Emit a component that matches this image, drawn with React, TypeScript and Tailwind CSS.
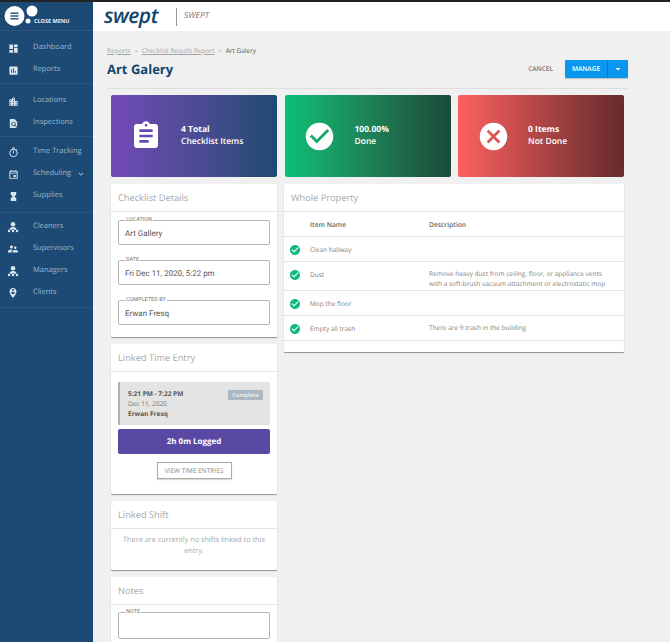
import { ReactNode } from 'react';
import {
  MdDashboard,
  MdAssessment,
  MdLocationCity,
  MdFindInPage,
  MdOutlineTimer,
  MdOutlineEvent,
  MdHourglassFull,
  MdPersonPinCircle,
  MdSupervisorAccount,
  MdExpandMore,
  MdArrowDropDown,
  MdAssignment,
  MdCheckCircle,
  MdCancel,
} from 'react-icons/md';

function OrgIcon() {
  return (
    <svg viewBox="0 0 24 24" className="w-[12px] h-[12px]" fill="currentColor">
      <circle cx="12" cy="6.500" r="4.500" />
      <path d="M5 17c0-3.500 3.500-5 7-5s7 1.500 7 5l-4 1-3-2-3 2z" />
      <circle cx="4" cy="20" r="2.500" />
      <circle cx="12" cy="20" r="2.500" />
      <circle cx="20" cy="20" r="2.500" />
    </svg>
  );
}

const navGroups: { padding: string; items: { label: string; icon: ReactNode; chevron?: boolean }[] }[] = [
  {
    padding: 'pt-[6px] pb-[2px]',
    items: [
      { label: 'Dashboard', icon: <MdDashboard size={11} /> },
      { label: 'Reports', icon: <MdAssessment size={11} /> },
    ],
  },
  {
    padding: 'pt-[6px] pb-[2px]',
    items: [
      { label: 'Locations', icon: <MdLocationCity size={11} /> },
      { label: 'Inspections', icon: <MdFindInPage size={11} /> },
    ],
  },
  {
    padding: 'pt-[4px] pb-[5px]',
    items: [
      { label: 'Time Tracking', icon: <MdOutlineTimer size={11} /> },
      { label: 'Scheduling', icon: <MdOutlineEvent size={11} />, chevron: true },
      { label: 'Supplies', icon: <MdHourglassFull size={11} /> },
    ],
  },
  {
    padding: 'pt-[3px] pb-[3px]',
    items: [
      { label: 'Cleaners', icon: <OrgIcon /> },
      { label: 'Supervisors', icon: <MdSupervisorAccount size={12} /> },
      { label: 'Managers', icon: <OrgIcon /> },
      { label: 'Clients', icon: <MdPersonPinCircle size={12} /> },
    ],
  },
];

function Sidebar() {
  return (
    <aside className="w-[93px] shrink-0 bg-[#1c4a74] text-[#9db8cf]">
      <div className="h-[29px] flex items-start border-b border-[#2a567e]">
        <svg viewBox="0 0 34 29" className="w-[34px] h-[29px] shrink-0 overflow-visible">
          <circle cx="14.500" cy="14" r="10" fill="#fff" />
          <rect x="10.500" y="10.500" width="8" height="1.400" fill="#1c4a74" />
          <rect x="10.500" y="13.300" width="8" height="1.400" fill="#1c4a74" />
          <rect x="10.500" y="16.100" width="8" height="1.400" fill="#1c4a74" />
          <circle cx="32" cy="9" r="5.500" fill="#fff" />
          <circle cx="28" cy="19" r="2.500" fill="#fff" />
        </svg>
        <span className="mt-[15px] text-[5.500px] leading-[8px] font-bold text-[#e8eef4] whitespace-nowrap">CLOSE MENU</span>
      </div>
      {navGroups.map((group, i) => (
        <div key={i} className={`${group.padding} border-b border-[#2a567e]`}>
          {group.items.map((item) => (
            <div key={item.label} className="h-[22px] flex items-center">
              <span className="w-[26px] mr-[7px] flex justify-center text-[#dbe5ee]">{item.icon}</span>
              <span className="text-[7.500px] whitespace-nowrap">{item.label}</span>
              {item.chevron && <MdExpandMore size={10} className="ml-[5px]" />}
            </div>
          ))}
        </div>
      ))}
    </aside>
  );
}

function StatCard({ icon, title, sub, gradient }: { icon: ReactNode; title: string; sub: string; gradient: string }) {
  return (
    <div className={`w-[166px] h-[82px] rounded-[2px] flex items-center text-white ${gradient}`}>
      <div className="w-[70px] flex justify-center">{icon}</div>
      <div className="text-[8.500px] leading-[12.500px]">
        <div className="font-bold">{title}</div>
        <div className="font-semibold">{sub}</div>
      </div>
    </div>
  );
}

function Panel({ title, className, children }: { title: string; className?: string; children: ReactNode }) {
  return (
    <section className={`bg-white rounded-[1px] shadow-[0_1px_1px_rgba(0,0,0,0.4)] ${className ?? ''}`}>
      <h2 className="h-[28px] pl-[7px] pt-[1px] flex items-center text-[9.250px] text-[#a8a8a8] border-b border-[#e3e3e3]">{title}</h2>
      {children}
    </section>
  );
}

function Field({ label, value, height = 'h-[28px]' }: { label: string; value?: string; height?: string }) {
  return (
    <fieldset className={`mx-[7px] border border-[#b5b5b5] rounded-[2px] pl-[6px] font-['Roboto',sans-serif] ${height}`}>
      <legend className="text-[5.500px] leading-[6px] text-[#777] uppercase px-[1px]">{label}</legend>
      {value && <div className="text-[8px] leading-[18px] text-[#555] mt-[2px]">{value}</div>}
    </fieldset>
  );
}

const rows = [
  { name: 'Clean hallway', desc: '', h: 'h-[25px]' },
  {
    name: 'Dust',
    desc: 'Remove heavy dust from ceiling, floor, or appliance vents with a soft-brush vacuum attachment or electrostatic mop',
    h: 'h-[29px]',
  },
  { name: 'Mop the floor', desc: '', h: 'h-[25px]' },
  { name: 'Empty all trash', desc: 'There are 9 trash in the building', h: 'h-[25px]' },
];

export default function App() {
  return (
    <div className="h-[642px] w-[670px] overflow-hidden flex flex-col bg-[#f0f0f0] font-['Open_Sans',sans-serif] [text-rendering:geometricPrecision]">
      <div className="h-[2px] bg-[#222] shrink-0" />
      <div className="flex flex-1 min-h-0">
        <Sidebar />
        <main className="flex-1 min-w-0">
          <header className="h-[29px] bg-white flex items-center">
            <span className="ml-[11px] w-[72px] text-[21px] leading-[26px] -mt-[2px] font-semibold italic text-[#12456b] tracking-[-0.5px]">swept</span>
            <span className="h-[18px] w-px bg-[#999]" />
            <span className="ml-[7px] text-[8.500px] italic text-[#777]">SWEPT</span>
          </header>

          <div className="ml-[14px] w-[521px] h-[58px] border-b border-[#dedede]">
            <div className="pt-[15px] flex items-center gap-[4px] text-[6.500px] leading-[9px] text-[#a5a5a5]">
              <span className="underline">Reports</span>
              <span>»</span>
              <span className="underline">Checklist Results Report</span>
              <span>»</span>
              <span className="text-[#555]">Art Galery</span>
            </div>
            <div className="flex items-start justify-between">
              <h1 className="mt-[4px] text-[13px] leading-[20px] font-bold text-[#12456b]">Art Galery</h1>
              <div className="flex items-center mt-[5px]">
                <span className="text-[6.500px] font-semibold text-[#777] mr-[12px]">CANCEL</span>
                <div className="w-[63px] h-[18px] bg-[#0a96ee] rounded-[1px] flex items-center text-white shadow-[0_1px_1px_rgba(0,0,0,0.2)]">
                  <span className="w-[42px] text-center text-[6.500px] font-semibold">MANAGE</span>
                  <span className="flex-1 h-full border-l border-[#0b76bb] flex items-center justify-center">
                    <MdArrowDropDown size={12} />
                  </span>
                </div>
              </div>
            </div>
          </div>

          <div className="ml-[18px] w-[513px] mt-[6px] flex justify-between">
            <StatCard
              icon={<MdAssignment size={32} />}
              title="4 Total"
              sub="Checklist Items"
              gradient="bg-gradient-to-r from-[#7249b8] to-[#1d4a72]"
            />
            <StatCard
              icon={<MdCheckCircle size={33} />}
              title="100.00%"
              sub="Done"
              gradient="bg-gradient-to-r from-[#08c076] to-[#1b4a3a]"
            />
            <StatCard
              icon={<MdCancel size={33} />}
              title="0 Items"
              sub="Not Done"
              gradient="bg-gradient-to-r from-[#ff6060] to-[#652b2d]"
            />
          </div>

          <div className="ml-[18px] mt-[7px] flex items-start gap-[7px]">
            <div className="w-[166px] flex flex-col gap-[7px] shrink-0">
              <Panel title="Checklist Details" className="h-[153px]">
                <div className="pt-[5px] flex flex-col gap-[12px]">
                  <Field label="Location" value="Art Gallery" />
                  <Field label="Date" value="Fri Dec 11, 2020, 5:22 pm" />
                  <Field label="Completed by" value="Erwan Fresq" />
                </div>
              </Panel>

              <Panel title="Linked Time Entry" className="h-[150px]">
                <div className="mx-[7px] mt-[10px] h-[43px] bg-[#e4e4e4] border-l-2 border-[#a9b5be] rounded-[1px] pl-[8px] pt-[7px] relative text-[6.500px] leading-[10px] text-[#555]">
                  <div className="font-bold">5:21 PM - 7:22 PM</div>
                  <div className="text-[#777]">Dec 11, 2020</div>
                  <div className="font-bold">Erwan Fresq</div>
                  <span className="absolute right-[7px] top-[8px] w-[35px] h-[10px] bg-[#a9b8c2] rounded-[1px] text-[5.500px] leading-[10px] text-center font-bold text-[#e8eef0]">Complete</span>
                </div>
                <div className="mx-[7px] mt-[4px] h-[25px] bg-[#5a48a5] rounded-[2px] flex items-center justify-center text-[8px] font-bold text-white">
                  2h 0m Logged
                </div>
                <div className="mt-[8px] flex justify-center">
                  <span className="w-[75px] h-[17px] border border-[#aaa] shadow-[0_1px_1px_rgba(0,0,0,0.15)] flex items-center justify-center text-[6.500px] text-[#888]">
                    VIEW TIME ENTRIES
                  </span>
                </div>
              </Panel>

              <Panel title="Linked Shift" className="h-[69px]">
                <p className="px-[7px] pt-[6px] text-center text-[7.300px] leading-[11px] text-[#a8a8a8]">
                  There are currently no shifts linked to this entry.
                </p>
              </Panel>

              <Panel title="Notes" className="h-[80px]">
                <div className="pt-[4px]">
                  <Field label="Note" height="h-[30px]" />
                </div>
              </Panel>
            </div>

            <Panel title="Whole Property" className="w-[340px] h-[168px]">
              <div className="h-[25px] pt-[3px] flex items-center text-[6.700px] font-semibold text-[#666] border-b border-[#e3e3e3]">
                <span className="ml-[26px] w-[119px]">Item Name</span>
                <span>Description</span>
              </div>
              {rows.map((row) => (
                <div key={row.name} className={`${row.h} flex items-start border-b border-[#e3e3e3] text-[6.500px] leading-[10px] text-[#808080]`}>
                  <MdCheckCircle size={12} className="ml-[5px] mt-[7px] w-[12px] shrink-0 text-[#10b981]" />
                  <span className="ml-[9px] w-[119px] mt-[8px] shrink-0">{row.name}</span>
                  {row.desc && <span className="mt-[7px] w-[185px]">{row.desc}</span>}
                </div>
              ))}
            </Panel>
          </div>
        </main>
      </div>
    </div>
  );
}
